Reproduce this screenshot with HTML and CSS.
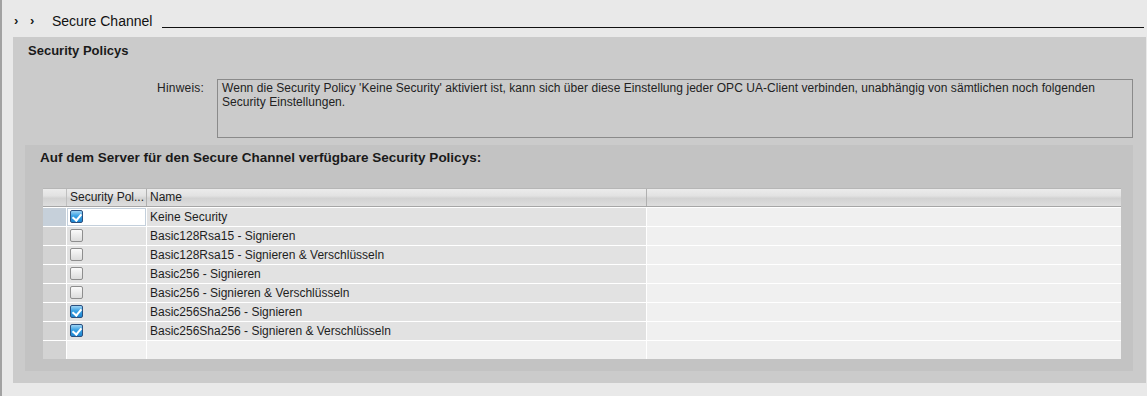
FILE: index.html
```html
<!DOCTYPE html>
<html>
<head>
<meta charset="utf-8">
<link rel="stylesheet" href="styles.css">
</head>
<body>
<div class="page">
  <div class="top">
    <span class="chev">›</span><span class="chev">›</span>
    <span class="top-title">Secure Channel</span>
    <span class="top-line"></span>
  </div>
  <div class="section">
    <div class="section-title">Security Policys</div>
    <div class="hint-row">
      <div class="hint-label">Hinweis:</div>
      <div class="hint-box">Wenn die Security Policy 'Keine Security' aktiviert ist, kann sich über diese Einstellung jeder OPC UA-Client verbinden, unabhängig von sämtlichen noch folgenden Security Einstellungen.</div>
    </div>
    <div class="group">
      <div class="group-title">Auf dem Server für den Secure Channel verfügbare Security Policys:</div>
      <div class="table">
        <div class="thead">
          <div class="th rh"></div>
          <div class="th">Security Pol...</div>
          <div class="th">Name</div>
          <div class="th last"></div>
        </div>
        <div class="tr">
          <div class="td rh sel"></div>
          <div class="td focus"><span class="cb on"></span></div>
          <div class="td">Keine Security</div>
          <div class="td rest"></div>
        </div>
        <div class="tr">
          <div class="td rh"></div>
          <div class="td"><span class="cb"></span></div>
          <div class="td">Basic128Rsa15 - Signieren</div>
          <div class="td rest"></div>
        </div>
        <div class="tr">
          <div class="td rh"></div>
          <div class="td"><span class="cb"></span></div>
          <div class="td">Basic128Rsa15 - Signieren &amp; Verschlüsseln</div>
          <div class="td rest"></div>
        </div>
        <div class="tr">
          <div class="td rh"></div>
          <div class="td"><span class="cb"></span></div>
          <div class="td">Basic256 - Signieren</div>
          <div class="td rest"></div>
        </div>
        <div class="tr">
          <div class="td rh"></div>
          <div class="td"><span class="cb"></span></div>
          <div class="td">Basic256 - Signieren &amp; Verschlüsseln</div>
          <div class="td rest"></div>
        </div>
        <div class="tr">
          <div class="td rh"></div>
          <div class="td"><span class="cb on"></span></div>
          <div class="td">Basic256Sha256 - Signieren</div>
          <div class="td rest"></div>
        </div>
        <div class="tr">
          <div class="td rh"></div>
          <div class="td"><span class="cb on"></span></div>
          <div class="td">Basic256Sha256 - Signieren &amp; Verschlüsseln</div>
          <div class="td rest"></div>
        </div>
        <div class="tr empty">
          <div class="td rh"></div>
          <div class="td"></div>
          <div class="td"></div>
          <div class="td rest"></div>
        </div>
      </div>
    </div>
  </div>
</div>
</body>
</html>
```

FILE: styles.css
```css
* { box-sizing: border-box; }
html, body { margin: 0; padding: 0; }
body {
  background: #e9e9e9;
  font-family: "Liberation Sans", Arial, sans-serif;
  font-size: 12px;
  color: #1a1a1a;
  width: 1147px;
  height: 396px;
  overflow: hidden;
}
.page {
  border-left: 2px solid #a2a2a2;
  height: 396px;
}
.top {
  height: 37px;
  display: flex;
  align-items: center;
  padding-top: 4px;
}
.chev {
  font-weight: bold;
  font-size: 13px;
  width: 16px;
  line-height: 1;
}
.chev:first-child { margin-left: 12px; }
.top-title {
  font-size: 14px;
  margin-left: 6px;
  color: #111;
}
.top-line {
  flex: 1;
  height: 1px;
  background: #111;
  margin: 13px 3px 0 10px;
}
.section {
  background: #cbcbcb;
  margin: 0 1px 0 11px;
  padding: 3px 13px 12px 0;
}
.section-title {
  font-weight: bold;
  font-size: 13px;
  padding-left: 15px;
  height: 21px;
  line-height: 21px;
}
.hint-row {
  display: flex;
  margin-top: 18px;
}
.hint-label {
  width: 204px;
  text-align: right;
  padding-right: 13px;
  padding-top: 2px;
  line-height: 14px;
  color: #222;
  letter-spacing: 0.2px;
}
.hint-box {
  flex: 1;
  height: 59px;
  border: 1px solid #8a8a8a;
  padding: 1px 4px;
  line-height: 14px;
  color: #222;
  letter-spacing: 0.05px;
}
.group {
  background: #c3c3c3;
  margin: 7px 0 0 12px;
  padding: 0 12px 12px 18px;
}
.group-title {
  font-weight: bold;
  font-size: 13.5px;
  height: 43px;
  line-height: 26px;
  margin-left: -3px;
}
.table {
  background: #ffffff;
  display: flex;
  flex-direction: column;
  gap: 1px;
}
.thead, .tr {
  display: grid;
  grid-template-columns: 23px 79px 499px 1fr;
  column-gap: 1px;
}
.thead {
  height: 19px;
  grid-template-columns: 24px 80px 500px 1fr;
  column-gap: 0;
  background: linear-gradient(#ececec 0%, #e2e2e2 40%, #d2d2d2 55%, #dedede 100%);
  border-top: 1px solid #b6b6b6;
  border-bottom: 1px solid #a6a6a6;
}
.th {
  border-right: 1px solid #b0b0b0;
  padding-left: 3px;
  line-height: 17px;
  white-space: nowrap;
  overflow: hidden;
  color: #222;
}
.th.rh { border-right: 1px solid #c0c0c0; }
.th.last { border-right: none; }
.tr { height: 18px; }
.td {
  background: #e2e2e2;
  padding-left: 3px;
  line-height: 18px;
  white-space: nowrap;
  overflow: hidden;
  color: #1e1e1e;
}
.td.rh { background: #d3d3d3; }
.td.rh.sel { background: #c6d0da; }
.td.rest { background: #f0f0f0; }
.tr.empty .td { background: #f0f0f0; }
.tr.empty .td.rh { background: #d3d3d3; }
.td.focus {
  background: #ffffff;
  border: 1px solid #c4d0dc;
  padding-left: 2px;
}
.cb {
  display: inline-block;
  width: 13px;
  height: 13px;
  margin-top: 2px;
  vertical-align: top;
  border: 1px solid #8e8e8e;
  border-radius: 2px;
  background: linear-gradient(#fafafa, #dcdcdc);
  position: relative;
}
.td.focus .cb { margin-top: 1px; }
.cb.on {
  border-color: #2b4f7e;
  background: linear-gradient(#9fd4f4 0%, #3aa2e4 45%, #1f86d0 100%);
}
.cb.on::after {
  content: "";
  position: absolute;
  left: 3px;
  top: 1px;
  width: 4px;
  height: 7px;
  border: solid #ffffff;
  border-width: 0 2px 2px 0;
  transform: rotate(40deg);
}
```
